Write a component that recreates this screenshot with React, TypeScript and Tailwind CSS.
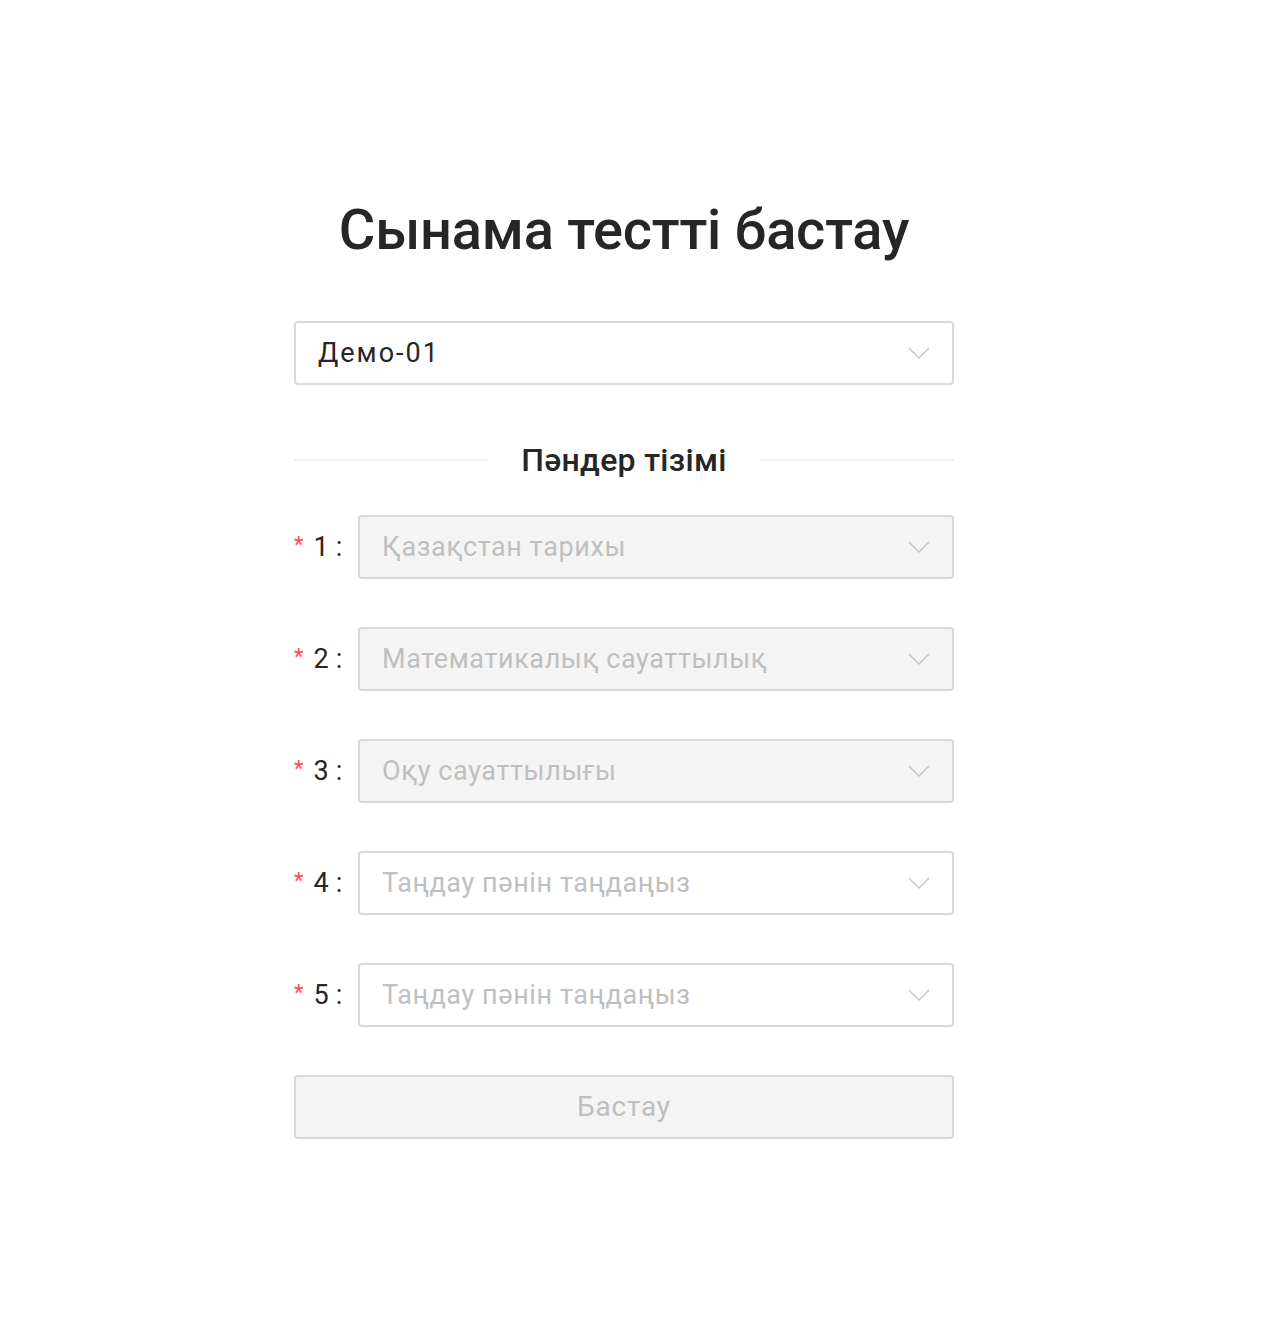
const font = { fontFamily: 'Roboto, "Noto Sans", sans-serif' };

function Chevron() {
  return (
    <svg width="22" height="12" viewBox="0 0 22 12" fill="none" className="shrink-0">
      <path d="M1 1 L11 11 L21 1" stroke="#c4c4c4" strokeWidth="1.4" />
    </svg>
  );
}

interface SelectProps {
  value?: string;
  placeholder?: string;
  disabled?: boolean;
}

function Select({ value, placeholder, disabled = false }: SelectProps) {
  return (
    <div
      className={
        "flex h-16 w-full items-center justify-between rounded border-2 border-[#d9d9d9] pl-[22px] pr-[22px] " +
        (disabled ? "bg-[#f4f4f4]" : "bg-white")
      }
    >
      {value ? (
        <span className="text-[27px] tracking-[2px] text-[#262626]">{value}</span>
      ) : (
        <span className="text-[27px] tracking-[0.6px] text-[#bfbfbf]">{placeholder}</span>
      )}
      <Chevron />
    </div>
  );
}

const subjects = [
  { n: 1, text: "Қазақстан тарихы", disabled: true },
  { n: 2, text: "Математикалық сауаттылық", disabled: true },
  { n: 3, text: "Оқу сауаттылығы", disabled: true },
  { n: 4, text: "Таңдау пәнін таңдаңыз", disabled: false },
  { n: 5, text: "Таңдау пәнін таңдаңыз", disabled: false },
];

export default function App() {
  return (
    <div className="min-h-[1318px] bg-white pr-6" style={font}>
      <div className="mx-auto flex w-[660px] flex-col pt-[196px]">
        <h1 className="text-center text-[56px] font-medium leading-[68px] tracking-[-0.2px] text-[#262626]">
          Сынама тестті бастау
        </h1>

        <div className="mt-[57px]">
          <Select value="Демо-01" />
        </div>

        <div className="mt-[57px] flex items-center gap-[33px]">
          <div className="h-[2px] flex-1 bg-[#f0f0f0]" />
          <span className="text-[32px] font-medium leading-[36px] tracking-[0.3px] text-[#262626]">Пәндер тізімі</span>
          <div className="h-[2px] flex-1 bg-[#f0f0f0]" />
        </div>

        <div className="mt-[37px] flex flex-col gap-12">
          {subjects.map((s) => (
            <div key={s.n} className="flex items-center">
              <div className="flex w-16 shrink-0 items-center">
                <span className="mr-[10px] -mt-[6px] text-[22px] text-[#ff4d4f]">*</span>
                <span className="text-[27px] text-[#262626]">{s.n}</span>
                <span className="ml-[7px] text-[27px] text-[#262626]">:</span>
              </div>
              <Select placeholder={s.text} disabled={s.disabled} />
            </div>
          ))}
        </div>

        <button className="mt-12 h-16 w-full rounded border-2 border-[#d9d9d9] bg-[#f4f4f4] text-[28px] tracking-[0.8px] text-[#bfbfbf]">
          Бастау
        </button>
      </div>
    </div>
  );
}
